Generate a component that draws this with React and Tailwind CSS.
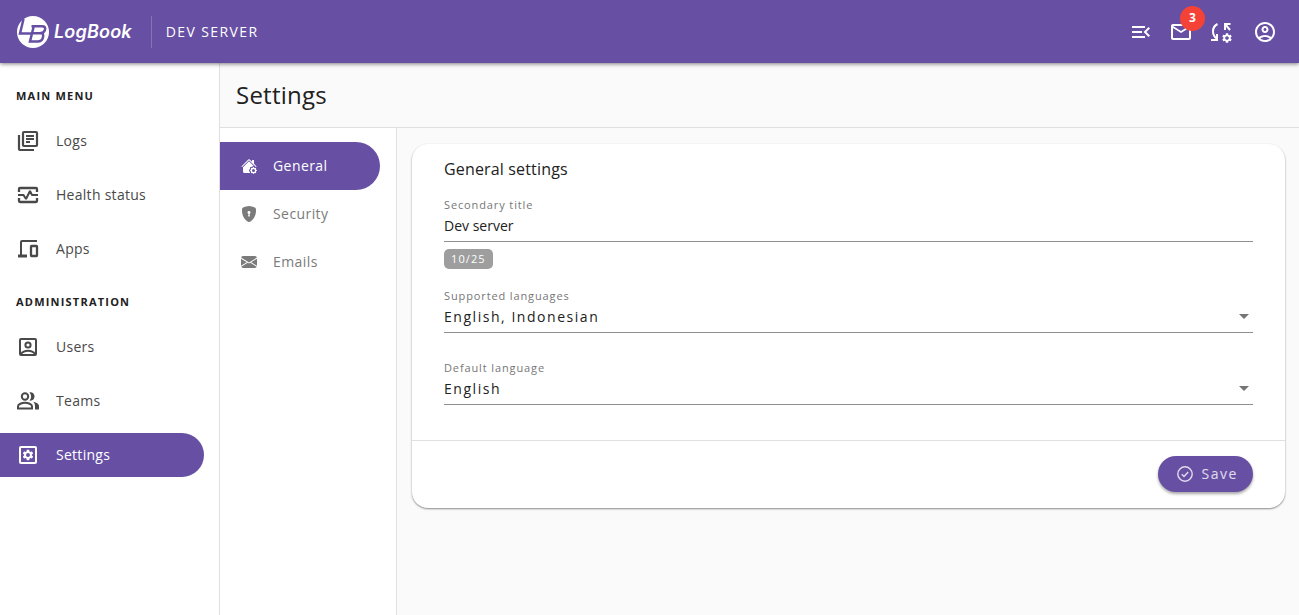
import { useState } from 'react';
import {
  MdArrowDropDown,
  MdMailOutline,
  MdMenuOpen,
  MdOutlineAccountCircle,
  MdSettings,
} from 'react-icons/md';
import { BsEnvelopeFill, BsHouseGearFill, BsShieldLockFill } from 'react-icons/bs';

const StrokeIcon = ({ className, children }) => (
  <svg viewBox="0 0 24 24" fill="none" stroke="currentColor" strokeWidth="2" className={className}>
    {children}
  </svg>
);

const LogsIcon = ({ className }) => (
  <StrokeIcon className={className}>
    <rect x="7" y="3" width="14" height="14" rx="1" strokeWidth="2.200" />
    <path d="M3 6v14q0 1 1 1h14" strokeWidth="2.200" />
    <path d="M10 7h8M10 10h8M10 13h4" />
  </StrokeIcon>
);

const HealthIcon = ({ className }) => (
  <StrokeIcon className={className}>
    <path d="M3 9V6q0-1 1-1h16q1 0 1 1v3M3 15v3q0 1 1 1h16q1 0 1-1v-3" strokeWidth="2.300" />
    <path d="M2 12h5.500l2.500 4 4-8 2 4H22" strokeLinejoin="bevel" />
  </StrokeIcon>
);

const AppsIcon = ({ className }) => (
  <StrokeIcon className={className}>
    <path d="M21 4H6q-1 0-1 1v14" />
    <path d="M2 19h9" strokeWidth="3" />
    <rect x="15" y="9" width="6" height="10" rx="0.500" strokeWidth="2.300" />
  </StrokeIcon>
);

const UsersIcon = ({ className }) => (
  <StrokeIcon className={className}>
    <rect x="4" y="4" width="16" height="16" rx="1" />
    <circle cx="12" cy="10" r="2.600" />
    <path d="M5 19c1.500-2.200 4-3.300 7-3.300s5.500 1.100 7 3.300" />
  </StrokeIcon>
);

const TeamsIcon = ({ className }) => (
  <StrokeIcon className={className}>
    <circle cx="9" cy="7.500" r="3.200" />
    <path d="M2 19.500v-2.300c0-2 4-3.400 7-3.400s7 1.400 7 3.400v2.300z" />
    <path
      d="M13.500 3.400c3-.6 5 1.600 5 4.100s-2 4.700-5 4.100c2.200-2.500 2.200-5.700 0-8.200zM17 12.800c3.500.6 6 2.200 6 4.400v3.300h-4v-3.300c0-1.900-.7-3.400-2-4.400z"
      fill="currentColor"
      stroke="none"
    />
  </StrokeIcon>
);

const SettingsIcon = ({ className }) => (
  <StrokeIcon className={className}>
    <rect x="4" y="4" width="16" height="16" rx="1" />
    <MdSettings x="5.500" y="5.500" size="13" stroke="none" />
  </StrokeIcon>
);

const SyncSettingsIcon = ({ className }) => (
  <StrokeIcon className={className}>
    <path d="M8.500 4C5.500 5.500 4 8.500 4 11.500c0 3 1.500 5.500 4 7.500M2 20h6v-6M21.500 4H16v6M16 4l5 6" />
    <MdSettings x="12" y="12" size="12" stroke="none" />
  </StrokeIcon>
);

const CheckIcon = ({ className }) => (
  <svg viewBox="0 0 16 16" fill="none" stroke="currentColor" strokeWidth="1.400" className={className}>
    <circle cx="8" cy="8" r="7.200" />
    <path d="M4.800 8.200 7 10.400l4.200-4.500" />
  </svg>
);

const Logo = () => (
  <svg viewBox="0 0 32 32" className="size-8">
    <circle cx="16" cy="16" r="16" fill="#fff" />
    <g fill="none" stroke="#6750a4" strokeWidth="2.500">
      <path d="M6.500 3 3 17.500h11.500" />
      <path d="M14.500 10.200H25q4 0 3 3.500-.8 3.300-4.500 3.300 3.500 0 2.500 4.200-.9 4.300-5.500 4.300H13l3.700-15M15 17.200h9" />
    </g>
  </svg>
);

const menu = [
  {
    title: 'Main menu',
    items: [
      { label: 'Logs', icon: LogsIcon },
      { label: 'Health status', icon: HealthIcon },
      { label: 'Apps', icon: AppsIcon },
    ],
  },
  {
    title: 'Administration',
    items: [
      { label: 'Users', icon: UsersIcon },
      { label: 'Teams', icon: TeamsIcon },
      { label: 'Settings', icon: SettingsIcon, active: true },
    ],
  },
];

const tabs = [
  { label: 'General', icon: BsHouseGearFill, active: true },
  { label: 'Security', icon: BsShieldLockFill },
  { label: 'Emails', icon: BsEnvelopeFill },
];

const Header = () => (
  <header className="z-10 flex h-[63px] shrink-0 items-center bg-[#6750a4] px-[17px] text-white shadow-[0_1px_4px_rgba(0,0,0,0.5)]">
    <a href="#home" className="flex items-center gap-[5px]">
      <Logo />
      <span className="font-[Inter] text-lg font-semibold tracking-[0.01em] italic">LogBook</span>
    </a>
    <span className="ml-[19px] flex h-8 items-center border-l border-white/20 pl-[14px] text-sm tracking-widest uppercase">
      Dev server
    </span>
    <div className="ml-auto flex items-center gap-4 pr-[5px]">
      <button type="button" aria-label="Collapse menu">
        <MdMenuOpen className="size-6" />
      </button>
      <button type="button" aria-label="Messages" className="relative">
        <MdMailOutline className="size-6" />
        <span className="absolute -top-[14px] left-[11px] flex size-[25px] items-center justify-center rounded-full bg-[#f44336] text-xs font-bold">
          3
        </span>
      </button>
      <button type="button" aria-label="Sync settings">
        <SyncSettingsIcon className="size-6" />
      </button>
      <button type="button" aria-label="Account" className="ml-1">
        <MdOutlineAccountCircle className="size-6" />
      </button>
    </div>
  </header>
);

const Sidebar = () => (
  <nav className="flex w-[220px] shrink-0 flex-col gap-[23px] border-r border-[#e0e0e0] bg-white pt-[25px]">
    {menu.map((group) => (
      <div key={group.title}>
        <h2 className="px-4 text-[11px] leading-4 font-bold tracking-[0.11em] text-[#212121] uppercase">
          {group.title}
        </h2>
        <ul className="mt-[15px] mr-[15px] space-y-[10px]">
          {group.items.map(({ label, icon: Icon, active }) => (
            <li key={label}>
              <a
                href={`#${label}`}
                className={`flex h-11 items-center gap-4 rounded-r-full pl-4 text-sm tracking-[0.02em] ${
                  active ? 'bg-[#6750a4] text-white' : 'text-[#494949]'
                }`}
              >
                <Icon className="size-6" />
                {label}
              </a>
            </li>
          ))}
        </ul>
      </div>
    ))}
  </nav>
);

const SelectField = ({ id, label, options }) => (
  <div>
    <label htmlFor={id} className="block text-[11px] leading-4 tracking-[0.08em] text-[#777]">
      {label}
    </label>
    <div className="relative border-b border-[#8f8f8f]">
      <select id={id} className="block h-7 w-full appearance-none bg-transparent pb-[2px] text-sm tracking-[0.11em] outline-none">
        {options.map((option) => (
          <option key={option}>{option}</option>
        ))}
      </select>
      <MdArrowDropDown className="pointer-events-none absolute top-0 -right-[3px] size-6 text-[#757575]" />
    </div>
  </div>
);

const GeneralSettings = () => {
  const [title, setTitle] = useState('Dev server');

  return (
    <form className="rounded-2xl bg-white shadow-[0_1px_2px_rgba(0,0,0,0.45)]">
      <div className="px-8 pt-[11px] pb-[35px]">
        <h2 className="text-base leading-7 font-medium tracking-[0.01em]">General settings</h2>
        <label htmlFor="title" className="mt-[14px] block text-[11px] leading-4 tracking-[0.08em] text-[#777]">
          Secondary title
        </label>
        <input
          id="title"
          value={title}
          maxLength={25}
          onChange={(e) => setTitle(e.target.value)}
          className="block h-[29px] w-full border-b border-[#8f8f8f] pb-1 text-sm outline-none"
        />
        <span className="mt-[7px] block w-fit rounded-[5px] bg-[#9e9e9e] px-[7px] text-[11px] leading-5 tracking-widest text-white">
          {title.length}/25
        </span>
        <div className="mt-[19px] space-y-[27px]">
          <SelectField id="languages" label="Supported languages" options={['English, Indonesian', 'English', 'Indonesian']} />
          <SelectField id="language" label="Default language" options={['English', 'Indonesian']} />
        </div>
      </div>
      <div className="flex justify-end border-t border-[#e0e0e0] px-8 pt-[15px] pb-4">
        <button
          type="button"
          className="flex h-9 items-center gap-[9px] rounded-full bg-[#6750a4] pr-[15px] pl-[19px] text-sm tracking-[0.11em] text-white/80 shadow-[0_2px_3px_rgba(0,0,0,0.35)]"
        >
          <CheckIcon className="size-4" />
          Save
        </button>
      </div>
    </form>
  );
};

const App = () => (
  <div className="flex h-screen flex-col bg-[#fafafa] font-['Open_Sans',sans-serif] text-[#212121]">
    <Header />
    <div className="flex min-h-0 flex-1">
      <Sidebar />
      <main className="flex min-w-0 flex-1 flex-col">
        <div className="flex h-[65px] items-center border-b border-[#e0e0e0] px-4">
          <h1 className="text-2xl tracking-[0.01em]">Settings</h1>
        </div>
        <div className="flex flex-1">
          <nav className="w-[177px] shrink-0 border-r border-[#e0e0e0] bg-white pt-[14px] pr-4">
            {tabs.map(({ label, icon: Icon, active }) => (
              <a
                key={label}
                href={`#${label}`}
                className={`flex h-12 items-center gap-4 rounded-r-full pl-[21px] text-sm font-medium tracking-[0.03em] ${
                  active ? 'bg-[#6750a4] text-white' : 'text-[#7b7b7b]'
                }`}
              >
                <Icon className="size-4" />
                {label}
              </a>
            ))}
          </nav>
          <section className="flex-1 py-4 pr-[14px] pl-[15px]">
            <GeneralSettings />
          </section>
        </div>
      </main>
    </div>
  </div>
);

export default App;
